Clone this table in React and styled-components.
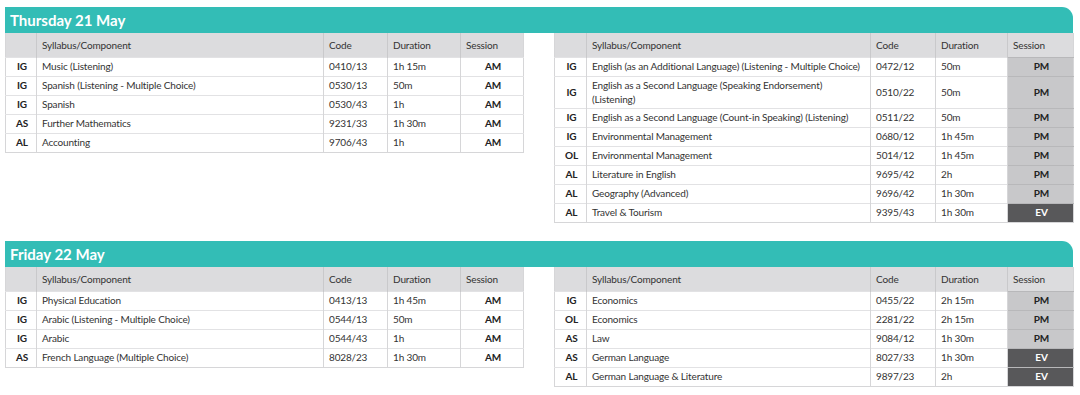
import React from "react";
import styled, { createGlobalStyle } from "styled-components";

const days = [
  {
    title: "Thursday 21 May",
    left: [
      ["IG", "Music (Listening)", "0410/13", "1h 15m", "AM"],
      ["IG", "Spanish (Listening - Multiple Choice)", "0530/13", "50m", "AM"],
      ["IG", "Spanish", "0530/43", "1h", "AM"],
      ["AS", "Further Mathematics", "9231/33", "1h 30m", "AM"],
      ["AL", "Accounting", "9706/43", "1h", "AM"],
    ],
    right: [
      ["IG", "English (as an Additional Language) (Listening - Multiple Choice)", "0472/12", "50m", "PM"],
      ["IG", "English as a Second Language (Speaking Endorsement) (Listening)", "0510/22", "50m", "PM"],
      ["IG", "English as a Second Language (Count-in Speaking) (Listening)", "0511/22", "50m", "PM"],
      ["IG", "Environmental Management", "0680/12", "1h 45m", "PM"],
      ["OL", "Environmental Management", "5014/12", "1h 45m", "PM"],
      ["AL", "Literature in English", "9695/42", "2h", "PM"],
      ["AL", "Geography (Advanced)", "9696/42", "1h 30m", "PM"],
      ["AL", "Travel & Tourism", "9395/43", "1h 30m", "EV"],
    ],
  },
  {
    title: "Friday 22 May",
    left: [
      ["IG", "Physical Education", "0413/13", "1h 45m", "AM"],
      ["IG", "Arabic (Listening - Multiple Choice)", "0544/13", "50m", "AM"],
      ["IG", "Arabic", "0544/43", "1h", "AM"],
      ["AS", "French Language (Multiple Choice)", "8028/23", "1h 30m", "AM"],
    ],
    right: [
      ["IG", "Economics", "0455/22", "2h 15m", "PM"],
      ["OL", "Economics", "2281/22", "2h 15m", "PM"],
      ["AS", "Law", "9084/12", "1h 30m", "PM"],
      ["AS", "German Language", "8027/33", "1h 30m", "EV"],
      ["AL", "German Language & Literature", "9897/23", "2h", "EV"],
    ],
  },
];

const leftCols = [31, 287, 64, 73, 63];
const rightCols = [32, 284, 65, 72, 66];

function Timetable({ rows, cols }) {
  return (
    <Table>
      <colgroup>
        {cols.map((w, i) => (
          <col key={i} style={{ width: w }} />
        ))}
      </colgroup>
      <thead>
        <tr>
          <Th />
          <Th>Syllabus/Component</Th>
          <Th>Code</Th>
          <Th>Duration</Th>
          <Th>Session</Th>
        </tr>
      </thead>
      <tbody>
        {rows.map((r) => (
          <tr key={r[2]}>
            <Level>{r[0]}</Level>
            <Td>{r[1]}</Td>
            <Td>{r[2]}</Td>
            <Td>{r[3]}</Td>
            <Session $session={r[4]}>{r[4]}</Session>
          </tr>
        ))}
      </tbody>
    </Table>
  );
}

export default function App() {
  return (
    <Page>
      <GlobalStyle />
      {days.map((day) => (
        <Day key={day.title}>
          <DayBar>{day.title}</DayBar>
          <Columns>
            <Timetable rows={day.left} cols={leftCols} />
            <Timetable rows={day.right} cols={rightCols} />
          </Columns>
        </Day>
      ))}
    </Page>
  );
}

const GlobalStyle = createGlobalStyle`
  body {
    margin: 0;
    background: #ffffff;
    font-family: Lato, "Noto Sans", sans-serif;
  }
`;

const Page = styled.div`
  padding: 7px 7px 0 5px;
  display: flex;
  flex-direction: column;
  gap: 18px;
`;

const Day = styled.section`
  display: flex;
  flex-direction: column;
`;

const DayBar = styled.div`
  height: 26px;
  background: #33bdb6;
  color: #ffffff;
  border-top-right-radius: 11px;
  padding-left: 5px;
  font-size: 15px;
  font-weight: 700;
  line-height: 27px;
`;

const Columns = styled.div`
  display: grid;
  grid-template-columns: 518px 519px;
  justify-content: space-between;
  align-items: start;
`;

const Table = styled.table`
  border-collapse: collapse;
  table-layout: fixed;
  width: 100%;
  font-size: 10px;
  letter-spacing: -0.15px;
  color: #333333;
  border: 1px solid #d6d6d8;
  border-top: none;
`;

const Th = styled.th`
  height: 24px;
  padding: 0 5px;
  background: #dcdcde;
  font-weight: 400;
  text-align: left;
  color: #333333;
  border-left: 1px solid #c9c9cb;

  &:first-child {
    border-left: none;
  }
`;

const Td = styled.td`
  height: 14px;
  padding: 2px 3px 2px 5px;
  line-height: 13.5px;
  border-top: 1px solid #e2e2e4;
  border-left: 1px solid #d6d6d8;
`;

const Level = styled(Td)`
  text-align: center;
  font-weight: 700;
  border-left: none;
  color: #222222;
`;

const Session = styled(Td)`
  text-align: center;
  font-weight: 700;
  background: ${(p) =>
    p.$session === "PM" ? "#c8c8ca" : p.$session === "EV" ? "#58585a" : "#ffffff"};
  color: ${(p) => (p.$session === "EV" ? "#ffffff" : "#222222")};
  border-top-color: ${(p) => (p.$session === "AM" ? "#e2e2e4" : "#b8b8ba")};
`;
